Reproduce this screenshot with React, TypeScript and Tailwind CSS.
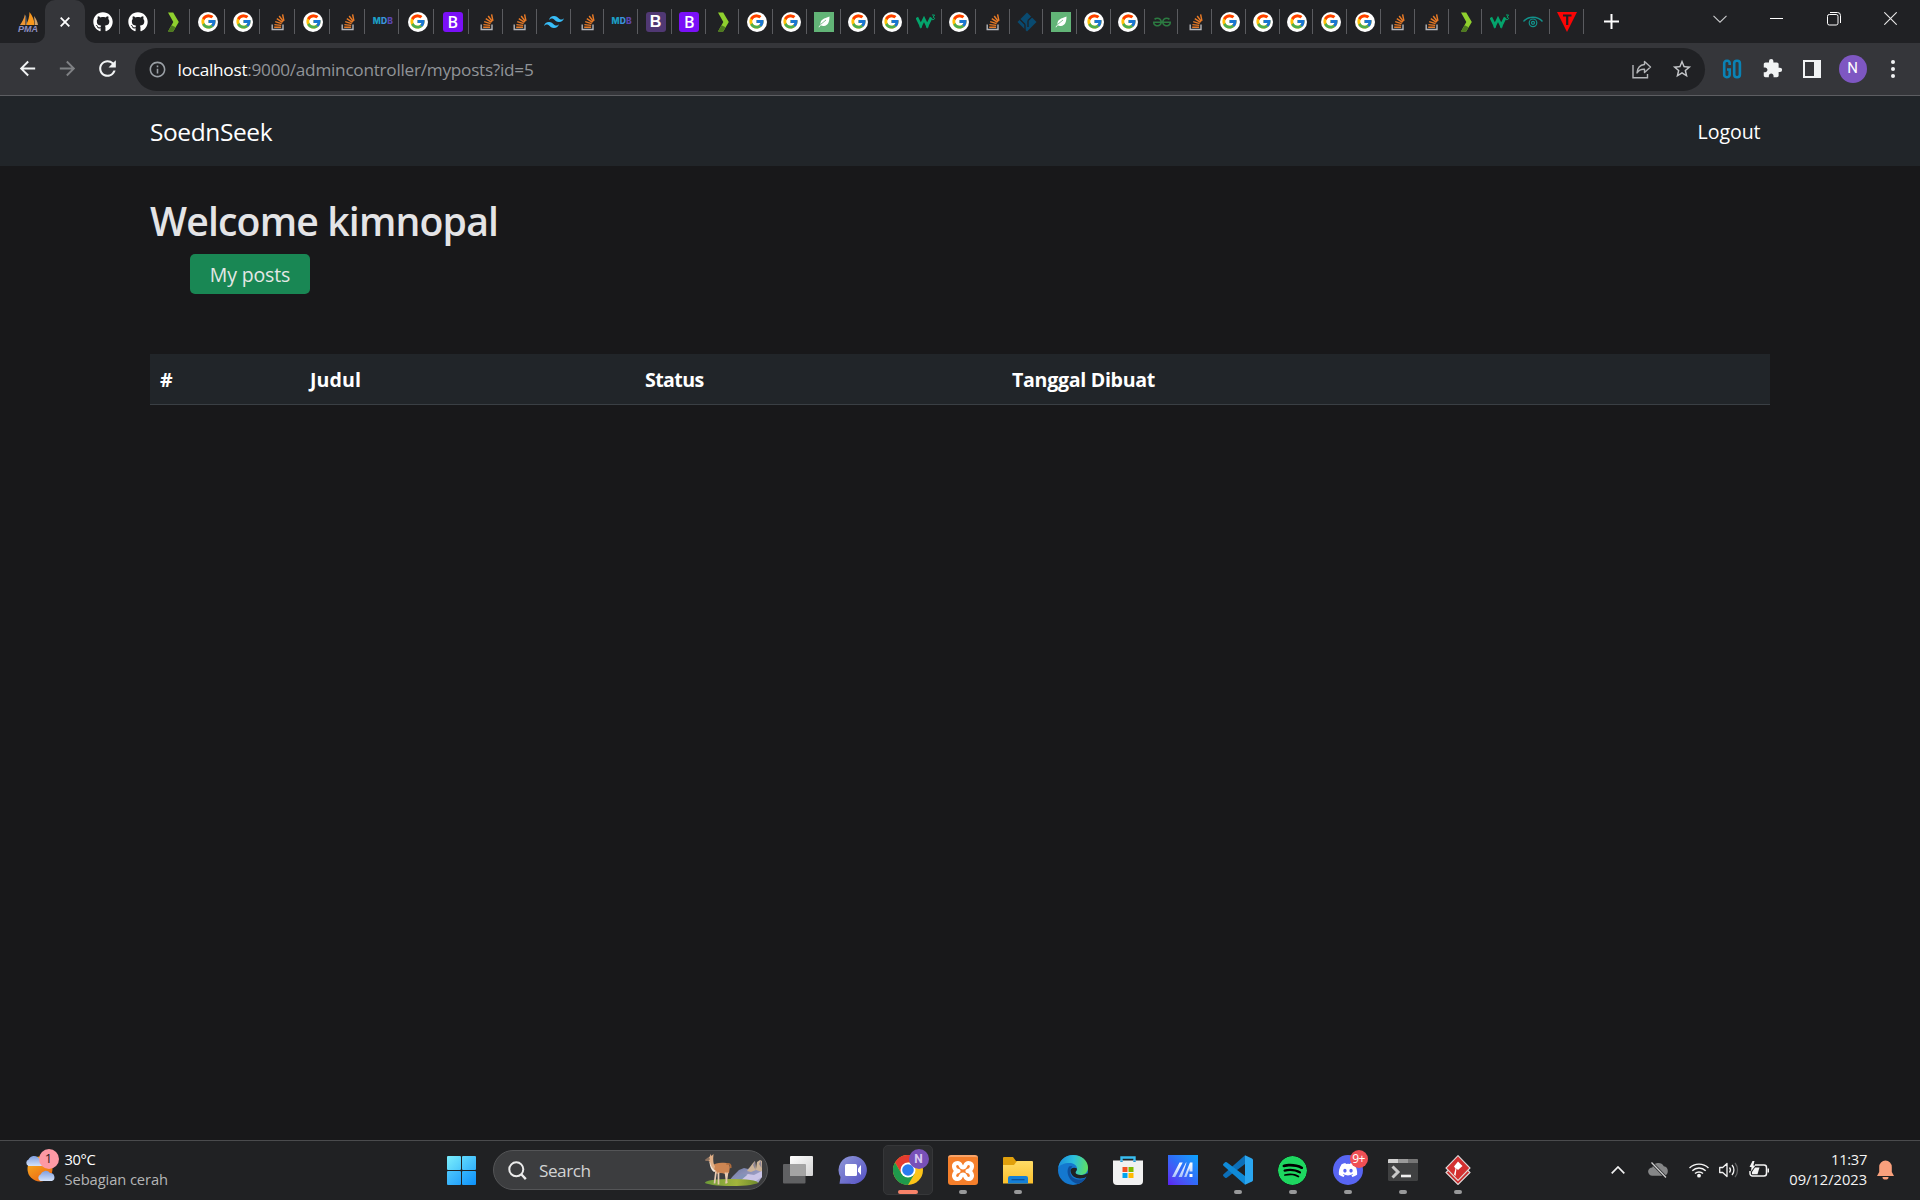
import React from 'react';
import { FcGoogle } from 'react-icons/fc';
import { FaGithub, FaLeaf, FaDiscord } from 'react-icons/fa';
import { SiTailwindcss, SiGeeksforgeeks, SiSpotify } from 'react-icons/si';
import { MdExtension, MdRefresh, MdArrowBack, MdArrowForward, MdInfoOutline, MdStarBorder } from 'react-icons/md';

/* ---------- favicons ---------- */

const Google = () => (
  <div className="flex size-5 items-center justify-center rounded-full bg-white">
    <FcGoogle size={17} />
  </div>
);

const StackOverflow = () => (
  <svg width="20" height="20" viewBox="0 0 20 20" fill="none">
    <path d="M4.2 12.5v5h10.8v-5" stroke="#b4b6ba" strokeWidth="1.4" />
    <path d="M6.2 15.3h6.9M6.4 12.6l6.8.8M7.2 9.6l6.4 2M8.8 6.6l5.7 3.7M11.2 4l4.1 5.5M14.6 2.4l1.3 6.5" stroke="#e87a26" strokeWidth="1.45" />
  </svg>
);

const GreenChevron = () => (
  <svg width="20" height="20" viewBox="0 0 20 20">
    <path d="M5 0.5h5.2L15.8 10l-5.6 9.5H5L10.3 10z" fill="#8fd02e" />
    <path d="M5 19.5l3.6-6.2 4 2L10.2 19.5z" fill="#4d7a20" />
  </svg>
);

const Mdb = () => (
  <div className="flex font-['Inter'] text-[8.5px] leading-none font-extrabold tracking-[0.2px]">
    <span className="text-[#1c9fc4]">M</span>
    <span className="text-[#3a94dc]">D</span>
    <span className="text-[#5c46b0]">B</span>
  </div>
);

const Bootstrap = ({ old }: { old?: boolean }) => (
  <div
    className={`flex size-5 items-center justify-center rounded-[3px] text-[16px] leading-none text-white ${
      old ? "bg-[#503873] font-['Liberation_Sans'] font-bold" : "bg-[#7a10f7] font-['Open_Sans'] font-semibold"
    }`}
  >
    B
  </div>
);

const Leaf = () => (
  <div className="flex size-5 items-center justify-center bg-[#62b477]">
    <svg width="12" height="12" viewBox="0 0 12 12">
      <path d="M11.5 0.5C11.500 6 10 9.500 6 10c-1.500.2-2.500-.3-3.200-.8L1 11.500l-.5-.5 2-2.500C2 3.500 6 2.500 11.500.5z" fill="#fff" />
      <path d="M2.500 8.500L8 4" stroke="#62b477" strokeWidth="0.8" />
    </svg>
  </div>
);

const W3 = () => (
  <svg width="20" height="20" viewBox="0 0 20 20" fill="none" stroke="#04a46c">
    <path d="M0.8 5.500l4 8 3.200-6.500 3.200 6.500 4-8" strokeWidth="2.800" />
    <path d="M4.800 15.500v-4M11.200 15.500v-4" strokeWidth="2.400" />
    <path d="M16 3h2.600l-1.500 2.200c2 0 2.200 3-1.300 2.400" strokeWidth="1" />
  </svg>
);

const Diamond = () => (
  <svg width="20" height="20" viewBox="0 0 20 20">
    <path d="M10 0.5L19.500 10 10 19.500 0.500 10z" fill="#094a70" />
    <path d="M3 7.500L8 12.500M8 12.500V18M11 8.500L15 4.800M11 8.500v6.500" stroke="#202124" strokeWidth="1.3" fill="none" />
  </svg>
);

const Eye = () => (
  <svg width="20" height="20" viewBox="0 0 20 20" fill="none" stroke="#12938c">
    <path d="M0.5 9.500C3 6.500 6 5.200 10 5.200S17 6.500 19.500 9.500" strokeWidth="1.4" />
    <circle cx="10" cy="10.800" r="3.800" strokeWidth="1.200" />
    <circle cx="10" cy="10.800" r="1.500" strokeWidth="1.300" />
  </svg>
);

const RedT = () => (
  <svg width="20" height="20" viewBox="0 0 20 20">
    <path d="M0 0h20L10 20z" fill="#fb0505" />
    <path d="M6 3.500h8.500M10.200 3.500v9.500" stroke="#202124" strokeWidth="2.2" />
  </svg>
);

const Pma = () => (
  <div className="relative size-5">
    <svg width="20" height="20" viewBox="0 0 20 20">
      <path d="M6 2L6.500 13H1C3 10 5 7 6 2z" fill="#ee9534" />
      <path d="M10.500 0C13.500 4 15.500 8 15.500 13H7C9 9 10.500 5 10.500 0z" fill="#f8981d" />
      <path d="M15 4c2 2.500 3.500 5.500 4 9h-3z" fill="#d0a36c" />
      <path d="M6.500 3.500l1 9" stroke="#8a8f98" strokeWidth="0.8" />
    </svg>
    <span className="absolute -bottom-px -left-px font-['Liberation_Sans'] text-[9px] leading-[8px] font-bold text-[#8d8fc0] italic">PMA</span>
  </div>
);

const Github = () => <FaGithub size={20} className="text-white" />;
const Tailwind = () => <SiTailwindcss size={20} className="text-[#38bdf8]" />;
const Gfg = () => <SiGeeksforgeeks size={18} className="text-[#2c7a41]" />;
const BootOld = () => <Bootstrap old />;
const Boot = () => <Bootstrap />;

const wideTabs = [Github, Github, GreenChevron, Google, Google, StackOverflow, Google, StackOverflow, Mdb, Google, Boot];
const narrowTabs = [
  StackOverflow, StackOverflow, Tailwind, StackOverflow, Mdb, BootOld, Boot, GreenChevron, Google, Google, Leaf,
  Google, Google, W3, Google, StackOverflow, Diamond, Leaf, Google, Google, Gfg, StackOverflow,
  Google, Google, Google, Google, Google, StackOverflow, StackOverflow, GreenChevron, W3, Eye, RedT,
];

function TabStrip() {
  return (
    <div className="flex h-[43px] bg-[#202124]">
      <div className="flex w-[45px] items-center pl-[19px]">
        <Pma />
      </div>
      <div className="relative flex w-10 shrink-0 items-center justify-center rounded-t-[10px] bg-[#35363a]">
        <div className="absolute bottom-0 -left-2.5 size-2.5 bg-[#35363a]">
          <div className="size-full rounded-br-[10px] bg-[#202124]" />
        </div>
        <div className="absolute -right-2.5 bottom-0 size-2.5 bg-[#35363a]">
          <div className="size-full rounded-bl-[10px] bg-[#202124]" />
        </div>
        <svg width="10" height="10" viewBox="0 0 10 10" stroke="#fff" strokeWidth="1.8">
          <path d="M0.7 0.7l8.600 8.600M9.300 0.700L0.700 9.300" />
        </svg>
      </div>
      <div className="flex items-center">
        {wideTabs.map((Icon, i) => (
          <div key={i} className="flex h-[25px] w-[34.95px] items-center justify-center border-r border-[#5a5b5f] pl-[3px]">
            <Icon />
          </div>
        ))}
        {narrowTabs.map((Icon, i) => (
          <div key={i} className="flex h-[25px] w-[33.77px] items-center justify-center border-r border-[#5a5b5f] pl-0.5">
            <Icon />
          </div>
        ))}
        <svg className="ml-[20px]" width="15" height="15" viewBox="0 0 15 15" stroke="#fff" strokeWidth="2">
          <path d="M7.5 0v15M0 7.500h15" />
        </svg>
      </div>
      <div className="ml-auto flex h-[37px] items-center pr-px">
        <div className="flex w-[57px] justify-center">
          <svg width="14" height="8" viewBox="0 0 14 8" fill="none" stroke="#c9cacc" strokeWidth="1.1">
            <path d="M0.5 0.800L7 7.200l6.500-6.400" />
          </svg>
        </div>
        <div className="flex w-[57px] justify-center">
          <div className="h-px w-[13px] bg-white" />
        </div>
        <div className="flex w-[57px] justify-center">
          <svg width="14" height="14" viewBox="0 0 14 14" fill="none" stroke="#fff" strokeWidth="1">
            <rect x="0.5" y="2.500" width="10.500" height="10.500" rx="1.800" />
            <path d="M3 0.500h7.500a3 3 0 0 1 3 3V11" />
          </svg>
        </div>
        <div className="flex w-[57px] justify-center">
          <svg width="13" height="13" viewBox="0 0 13 13" stroke="#e8e8e8" strokeWidth="1.1">
            <path d="M0.3 0.300l12.400 12.400M12.700 0.300L0.300 12.700" />
          </svg>
        </div>
      </div>
    </div>
  );
}

function Toolbar() {
  return (
    <div className="flex h-[53px] items-center border-b border-[#5d5e62] bg-[#35363a] pt-px">
      <div className="flex w-[135px] items-center pb-0.5 pl-[7px]">
        <div className="flex w-10 justify-center text-[#f1f3f4]"><MdArrowBack size={23} /></div>
        <div className="flex w-10 justify-center text-[#7f8184]"><MdArrowForward size={23} /></div>
        <div className="flex w-[41px] justify-center text-[#f1f3f4]"><MdRefresh size={25} /></div>
      </div>
      <div className="flex h-[43px] w-[1570px] items-center rounded-full bg-[#202124] pr-[3px]">
        <MdInfoOutline size={19} className="ml-[13px] text-[#9aa0a6]" />
        <div className="ml-[10.6px] text-[17.2px] tracking-[-0.26px] text-[#919498]">
          <span className="text-white">localhost</span>:9000/admincontroller/myposts?id=5
        </div>
        <div className="ml-auto flex w-10 justify-center">
          <svg width="20" height="19" viewBox="0 0 20 19" fill="none" stroke="#b4b6b9" strokeWidth="1.4">
            <path d="M1 5v12.700h14.500V14" />
            <path d="M12.5 1.500L18.500 7l-6 5.500V9.300C8.500 9 6.500 10.500 5 13c.300-4.500 2.800-8 7.500-8.500z" strokeLinejoin="round" />
          </svg>
        </div>
        <div className="flex w-10 justify-center pb-0.5 text-[#c4c6c9]"><MdStarBorder size={22} /></div>
      </div>
      <div className="flex flex-1 items-center pb-0.5 pl-[7px]">
        <div className="flex w-10 justify-center">
          <svg width="20" height="20" viewBox="0 0 20 20" fill="none" stroke="#0a82b4" strokeWidth="2.6">
            <path d="M7.7 6V4.300a2.300 2.300 0 0 0-2.300-2.500h-.800a2.400 2.400 0 0 0-2.400 2.500v11.400a2.400 2.400 0 0 0 2.400 2.500c2 0 3.100-1 3.100-2.500V10.500H5" />
            <rect x="12.2" y="1.800" width="5.700" height="16.400" rx="2.600" />
          </svg>
        </div>
        <div className="flex w-[41px] justify-center text-[#f1f3f4]"><MdExtension size={21} /></div>
        <div className="flex w-[38px] justify-center">
          <div className="h-[18px] w-[18px] border-2 border-r-[7px] border-[#f1f3f4]" />
        </div>
        <div className="flex w-[43px] justify-center">
          <div className="flex size-7 items-center justify-center rounded-full bg-[#7e57c2] font-['Roboto'] text-[15px] text-white">N</div>
        </div>
        <div className="flex w-[37px] flex-col items-center gap-[3px]">
          <div className="size-1 rounded-full bg-[#f1f3f4]" />
          <div className="size-1 rounded-full bg-[#f1f3f4]" />
          <div className="size-1 rounded-full bg-[#f1f3f4]" />
        </div>
      </div>
    </div>
  );
}

/* ---------- page ---------- */

function Page() {
  return (
    <div className="flex flex-1 flex-col bg-[#18181a]">
      <nav className="flex h-[70px] items-center justify-between bg-[#212529] pt-0.5 pr-[159.5px] pl-[150px] text-white">
        <span className="text-[24.5px] tracking-[-0.4px]">SoednSeek</span>
        <span className="text-[19.6px] tracking-[-0.08px]">Logout</span>
      </nav>
      <main className="flex flex-col items-start px-[150px] pt-[31px]">
        <h1 className="text-[39.2px] leading-[48px] font-semibold tracking-[-0.85px] text-[#e4e4e6]">Welcome kimnopal</h1>
        <button className="mt-[9px] ml-10 h-10 w-[120px] rounded-[5px] bg-[#198754] pt-0.5 text-[19.5px] tracking-[-0.15px] text-[#e4e8e6]">My posts</button>
        <div className="mt-[60px] flex h-[51px] w-full items-center border-b border-[#3a3f44] bg-[#212529] pt-0.5 pl-2.5 text-[19.6px] font-bold text-white">
          <span className="w-[150px]">#</span>
          <span className="w-[335px] tracking-[0.1px]">Judul</span>
          <span className="w-[367px] tracking-[-0.6px]">Status</span>
          <span className="tracking-[-0.3px]">Tanggal Dibuat</span>
        </div>
      </main>
    </div>
  );
}

/* ---------- taskbar ---------- */

const Weather = () => (
  <div className="relative -mt-0.5 h-[30px] w-[39.5px]">
    <svg width="40" height="34" viewBox="0 0 40 34" className="absolute top-0 left-0">
      <defs>
        <linearGradient id="sun" x1="0" y1="0" x2="0.6" y2="1">
          <stop offset="0" stopColor="#f9b924" />
          <stop offset="1" stopColor="#ec6a12" />
        </linearGradient>
        <linearGradient id="cloud" x1="0" y1="0" x2="0" y2="1">
          <stop offset="0" stopColor="#7f9fe0" />
          <stop offset="1" stopColor="#d4e2fa" />
        </linearGradient>
      </defs>
      <circle cx="15" cy="15" r="12.5" fill="url(#sun)" />
      <path d="M3.5 12a3.500 3.500 0 0 1 0-6.500 6 6 0 0 1 10-1.500l6 4v4z" fill="url(#cloud)" />
      <path d="M15.5 27a3.500 3.500 0 0 1 0-6.500 5.500 5.500 0 0 1 9.500-1.500 4.200 4.200 0 0 1 2 8z" fill="url(#cloud)" />
    </svg>
    <span className="absolute -top-[5px] left-[13.5px] flex size-5 items-center justify-center rounded-full bg-[#fd99a4] text-[13px] text-[#2a1a1d]">1</span>
  </div>
);

const Start = () => (
  <div className="grid grid-cols-2 gap-px">
    <div className="size-[14px] rounded-[1px] bg-linear-to-br from-[#7aeefc] to-[#4cc8fc]" />
    <div className="size-[14px] rounded-[1px] bg-linear-to-br from-[#5fd8fd] to-[#30b0fb]" />
    <div className="size-[14px] rounded-[1px] bg-linear-to-br from-[#4cc6fc] to-[#23a2fb]" />
    <div className="size-[14px] rounded-[1px] bg-linear-to-br from-[#35b5fc] to-[#0b91fa]" />
  </div>
);

const Alpaca = () => (
  <svg width="60" height="34" viewBox="0 0 60 34">
    <defs>
      <linearGradient id="grass" x1="0" y1="0" x2="1" y2="0">
        <stop offset="0" stopColor="#6d9a38" />
        <stop offset="0.6" stopColor="#a3b43c" />
        <stop offset="1" stopColor="#6e8a2c" />
      </linearGradient>
      <linearGradient id="hill" x1="0" y1="0" x2="1" y2="1">
        <stop offset="0" stopColor="#66749e" />
        <stop offset="1" stopColor="#b4b0d4" />
      </linearGradient>
    </defs>
    <path d="M24 29l5-6 6-6 5-2 4 1 4-3 5 3 5-2v10l-4 6z" fill="url(#hill)" />
    <path d="M43 18l3-4 3-4 2-2 1 8 1-7 3-2 2 1v11l-6-2-5 2z" fill="#cdb498" />
    <path d="M49 12l2-4 .5 9zM55 11l2-4 .5 8z" fill="#8d8596" />
    <path d="M36 26l8-5 6 1 8-4v6l-6 4-10 1z" fill="#c9c4e6" />
    <path d="M30 27l8-6 5 1-8 7z" fill="#8292b8" />
    <ellipse cx="27.5" cy="29.500" rx="26.500" ry="3.500" fill="url(#grass)" />
    <path d="M8.500 12.500c3-2.500 7-3.300 14-2.500 2 .3 3.300 2 3.300 4.500L25 20l-4 1c-3-1.200-6-1.200-8 0l-4-4z" fill="#cd8653" />
    <path d="M23 11c2-.5 4-.5 3.800 3.500" stroke="#b06c3c" strokeWidth="1.6" fill="none" strokeLinecap="round" />
    <path d="M3 7.500l3-4.500L6.500 1l1 2 2-2-.3 4.500C9.300 9 9.500 11 11 13.500l-1 3.500C7 15 6 12 5.500 8.500z" fill="#dfae86" />
    <path d="M1 6.800L4.500 4l1.500 2-1.500 2H1.500z" fill="#8a705e" />
    <path d="M6 9c.8 4 2.500 7 6 9l-2 1C7 17 5.800 13 5.500 9z" fill="#f2e6da" />
    <path d="M12 18.500l-1.500 12M14.500 19.500v12M21.500 19.500l1.300 10.500M23.500 19.500l-1.500 11" stroke="#e6c9b2" strokeWidth="1.7" />
  </svg>
);

const TaskView = () => (
  <svg width="30" height="30" viewBox="0 0 30 30">
    <defs>
      <linearGradient id="tv" x1="0" y1="0" x2="1" y2="1">
        <stop offset="0" stopColor="#fff" />
        <stop offset="1" stopColor="#d2d2d2" />
      </linearGradient>
    </defs>
    <rect x="7" y="1" width="23" height="20" rx="1" fill="url(#tv)" />
    <rect x="0" y="9" width="22.5" height="19.500" rx="1" fill="#606163" />
    <path d="M7 9h15.500v12H7z" fill="#a4a4a4" />
  </svg>
);

const Chat = () => (
  <svg width="30" height="30" viewBox="0 0 30 30">
    <defs>
      <linearGradient id="chat" x1="0" y1="0" x2="1" y2="1">
        <stop offset="0" stopColor="#8f98d8" />
        <stop offset="1" stopColor="#5450c4" />
      </linearGradient>
    </defs>
    <path d="M15 1a14 14 0 1 1-3 27.700H1.500L2.500 22A14 14 0 0 1 15 1z" fill="url(#chat)" />
    <rect x="7" y="9" width="12" height="12" rx="1.5" fill="#fff" />
    <path d="M20 13.500l3-3.500v10l-3-3.500z" fill="#fff" />
  </svg>
);

const Chrome = () => (
  <div className="relative size-[30px]">
    <svg width="30" height="30" viewBox="0 0 30 30">
      <circle cx="15" cy="15" r="15" fill="#fcc419" />
      <path d="M2 7.500A15 15 0 0 1 28 7.500H15L8.500 18.800z" fill="#e53b2f" />
      <path d="M2 7.500A15 15 0 0 0 15 30l6.500-11.200h-13z" fill="#1f9a4c" />
      <circle cx="15" cy="15" r="7.5" fill="#fff" />
      <circle cx="15" cy="15" r="5.8" fill="#2a7bf0" />
    </svg>
    <span className="absolute -top-[6px] left-4 flex size-5 items-center justify-center rounded-full bg-[#7850b8] font-['Roboto'] text-[12px] font-bold text-[#d8c8f0]">N</span>
  </div>
);

const Xampp = () => (
  <div className="flex size-[30px] items-center justify-center rounded-[3px] border-t-2 border-[#f9a468] bg-[#f57f2b] text-white">
    <svg width="24" height="22" viewBox="0 0 24 22" fill="none" stroke="#fff" strokeWidth="4.2" strokeLinejoin="round" strokeLinecap="round">
      <path d="M7.5 11C2 10 1.500 3 6.500 3c4 0 2.500 4.500 5.500 4.500S13.500 3 17.500 3c5 0 4.500 7-1 8 5.500 1 6 8 1 8-4 0-2.500-4.500-5.500-4.500S10.500 19 6.500 19c-5 0-4.500-7 1-8z" />
    </svg>
  </div>
);

const Folder = () => (
  <svg width="30" height="30" viewBox="0 0 30 30">
    <defs>
      <linearGradient id="fold" x1="0" y1="0" x2="0" y2="1">
        <stop offset="0" stopColor="#ffdc66" />
        <stop offset="1" stopColor="#fbc02c" />
      </linearGradient>
    </defs>
    <path d="M0 3a1 1 0 0 1 1-1h9l3 4H29v8H0z" fill="#e0a00c" />
    <path d="M0 10h11l3-4h15a1 1 0 0 1 1 1v21.500H0z" fill="url(#fold)" />
    <path d="M5 28.500V23a2 2 0 0 1 2-2h16a2 2 0 0 1 2 2v5.500z" fill="#1480d8" />
    <path d="M8.5 24.700h13" stroke="#0b4f96" strokeWidth="1.2" />
  </svg>
);

const Edge = () => (
  <svg width="30" height="30" viewBox="0 0 30 30">
    <defs>
      <linearGradient id="edgeTop" x1="0" y1="0.4" x2="1" y2="0.5">
        <stop offset="0" stopColor="#1b8fdc" />
        <stop offset="0.5" stopColor="#2cc0dc" />
        <stop offset="1" stopColor="#5fe060" />
      </linearGradient>
    </defs>
    <circle cx="15" cy="15" r="15" fill="#1478cf" />
    <path d="M0.2 13C1.500 5 7.500 0 15 0c9 0 15 6 15 12.500 0 5-3.500 7.500-7.500 7.500-3 0-5-1-5-2.500 0-1 1.500-1.500 1.500-4C19 10.500 16 8 11.500 8 6 8 1.500 10 0.200 13z" fill="url(#edgeTop)" />
    <path d="M11 11.500c-4 6 1 16 9 17.500 3-1 6-3 8-6-3 2-12 3-15-3-2-4-.500-7 1.500-8.500-1-.500-2.500-.500-3.500 0z" fill="#0e4f9c" />
    <path d="M12.5 15.500c0 5 5 8 9.500 8 3 0 5.500-.800 7-2l1.500-3-2 0c-1.500 1-3.800 1.500-6 1.500-3 0-5-1-5-2.500 0-1 1.500-1.500 1.500-4-3-1.500-6.500-.500-6.500 2z" fill="#202123" />
  </svg>
);

const Store = () => (
  <svg width="30" height="30" viewBox="0 0 30 30">
    <path d="M8.5 7V2.500h13V7" fill="none" stroke="#38bdf0" strokeWidth="2.4" />
    <path d="M0 5.500h30V26a4 4 0 0 1-4 4H4a4 4 0 0 1-4-4z" fill="#f1f1f1" />
    <path d="M7.3 5.500h2.400V7H7.300zM20.300 5.500h2.400V7h-2.400z" fill="#2498d4" />
    <path d="M9.5 12h5v5h-5z" fill="#f25022" />
    <path d="M15.5 12h5v5h-5z" fill="#7fba00" />
    <path d="M9.5 18h5v5h-5z" fill="#00a4ef" />
    <path d="M15.5 18h5v5h-5z" fill="#ffb900" />
  </svg>
);

const MyAsus = () => (
  <div className="flex size-[30px] items-center justify-center bg-linear-to-tr from-[#5a1cf0] via-[#2f6bf8] to-[#04a4fc]">
    <svg width="22" height="16" viewBox="0 0 22 16">
      <defs>
        <linearGradient id="asus" x1="0" y1="0" x2="0" y2="1">
          <stop offset="0" stopColor="#ffffff" />
          <stop offset="1" stopColor="#a9c4fb" />
        </linearGradient>
      </defs>
      <path d="M0 15L7.500 0.500h3.200L3.200 15zM6.500 15L14 0.500h.500L10 15zM12 15L18 0.500h2.500V9.500h-3V6.500L14.500 15z" fill="url(#asus)" />
      <path d="M17.5 12h3v3h-3z" fill="#fff" />
    </svg>
  </div>
);

const VsCode = () => (
  <svg width="30" height="30" viewBox="0 0 30 30">
    <path d="M22 0.300V9L3.800 22.700a1.300 1.300 0 0 1-1.700 0L.500 21.200a1.300 1.300 0 0 1 0-1.900z" fill="#0c6fb8" />
    <path d="M22 29.700V21L3.800 7.300a1.300 1.300 0 0 0-1.700 0L.500 8.800a1.300 1.300 0 0 0 0 1.900z" fill="#0f8ad8" />
    <path d="M22 0.200l7 3.200a1.800 1.800 0 0 1 1 1.600v20a1.800 1.800 0 0 1-1 1.600l-7 3.200z" fill="#2aa6f0" />
  </svg>
);

const Spotify = () => <SiSpotify size={29} className="rounded-full bg-black text-[#1ed760]" />;

const Discord = () => (
  <div className="relative flex size-[30px] items-center justify-center rounded-full bg-[#5865f2] text-white">
    <FaDiscord size={20} />
    <span className="absolute -top-[5px] left-[17px] flex size-[18px] items-center justify-center rounded-full bg-[#f04f55] text-[12px] tracking-[-0.5px]">9+</span>
  </div>
);

const Terminal = () => (
  <svg width="30" height="30" viewBox="0 0 30 30">
    <rect x="0" y="4" width="30" height="22" rx="1.5" fill="#404142" />
    <path d="M1 4h9.500v4H0V5a1 1 0 0 1 1-1z" fill="#d0d0d0" />
    <path d="M10.5 4H20v4h-9.500z" fill="#9a9a9a" />
    <path d="M20 4h9a1 1 0 0 1 1 1v3H20z" fill="#767676" />
    <path d="M4.5 11.500l5.500 5.500-5.500 5.500" fill="none" stroke="#c9c9c9" strokeWidth="3" />
    <path d="M13 21h10" stroke="#efefef" strokeWidth="2.6" />
  </svg>
);

const Paradigm = () => (
  <svg width="30" height="30" viewBox="0 0 30 30">
    <path d="M15 6L27 17.500 15 29.500 3 17.500z" fill="#c92f2f" stroke="#e2dcdc" strokeWidth="1.1" />
    <path d="M15 0.700L27 13 15 25.500 3 13z" fill="#d33030" stroke="#e2dcdc" strokeWidth="1.1" />
    <path d="M15 6.500l4.500 4.500-4.500 4-1.500-1.500-1 7.500-1.500-1.500 1.500-6-1.500-2z" fill="#fff" />
  </svg>
);

const apps: { Icon: () => React.ReactElement; mark?: 'active' | 'open' }[] = [
  { Icon: TaskView },
  { Icon: Chat },
  { Icon: Chrome, mark: 'active' },
  { Icon: Xampp, mark: 'open' },
  { Icon: Folder, mark: 'open' },
  { Icon: Edge },
  { Icon: Store },
  { Icon: MyAsus },
  { Icon: VsCode, mark: 'open' },
  { Icon: Spotify, mark: 'open' },
  { Icon: Discord, mark: 'open' },
  { Icon: Terminal, mark: 'open' },
  { Icon: Paradigm, mark: 'open' },
];

function Tray() {
  return (
    <div className="ml-auto flex items-center">
      <svg className="mr-[23px]" width="14" height="8" viewBox="0 0 14 8" fill="none" stroke="#f2f2f2" strokeWidth="1.7">
        <path d="M0.7 7.300L7 1l6.300 6.300" />
      </svg>
      <svg width="21" height="18" viewBox="0 0 21 18">
        <path d="M4.3 14.800a4.200 4.200 0 0 1 0-8.400A6.300 6.300 0 0 1 15.800 5.200 4.900 4.900 0 0 1 16 14.800z" fill="#858687" />
        <path d="M3.5 1.500l14.500 15" stroke="#202123" strokeWidth="2.8" />
        <path d="M3.5 1.500l14.500 15" stroke="#d0d0d0" strokeWidth="1.3" />
      </svg>
      <svg className="ml-5" width="20" height="16" viewBox="0 0 20 16" fill="none" stroke="#f4f4f4" strokeWidth="1.4">
        <path d="M0.5 6a13.500 13.500 0 0 1 19 0M3.300 8.800a9.500 9.500 0 0 1 13.400 0M6 11.600a5.700 5.700 0 0 1 8 0" />
        <circle cx="10" cy="13.7" r="1.9" fill="#f4f4f4" stroke="none" />
      </svg>
      <svg className="ml-[10px]" width="20" height="16" viewBox="0 0 20 16" fill="none" stroke="#f4f4f4" strokeWidth="1.3">
        <path d="M0.7 5.500h3L8 1.500v13L3.700 10.500h-3z" strokeLinejoin="round" />
        <path d="M10.5 5.500a4 4 0 0 1 0 5M13 3a7.500 7.500 0 0 1 0 10" />
        <path d="M16 1a11 11 0 0 1 0 14" stroke="#606162" />
      </svg>
      <svg className="ml-[10px]" width="21" height="18" viewBox="0 0 21 18">
        <path d="M6 4h9a2.500 2.500 0 0 1 2.500 2.500v6A2.500 2.500 0 0 1 15 15H3.500A2.500 2.500 0 0 1 1 12.500V10" fill="none" stroke="#f4f4f4" strokeWidth="1.5" />
        <path d="M18.5 7.500h1.500v4h-1.500z" fill="#f4f4f4" />
        <path d="M3 13.200V11l3-4.500h4.500l-2 6.700z" fill="#f4f4f4" />
        <path d="M3.5 0L0.500 6h2L2 10.500 6.500 4.500H4.300L5.500 0z" fill="#f4f4f4" />
      </svg>
      <div className="-mt-[3px] ml-[18px] w-[79px] text-right text-[14.7px] leading-5 text-[#f4f4f4]">
        <div className="tracking-[-0.3px]">11:37</div>
        <div className="tracking-[-0.03px]">09/12/2023</div>
      </div>
      <svg className="mr-[26px] ml-[10px]" width="17" height="20" viewBox="0 0 17 20" fill="#f9a07c">
        <path d="M8.5 0.500A6.300 6.300 0 0 1 14.800 7v5L17 16H0l2.200-4V7A6.300 6.300 0 0 1 8.500.500z" />
        <path d="M5.5 17h6a3 2.600 0 0 1-6 0z" />
      </svg>
    </div>
  );
}

function Taskbar() {
  return (
    <footer className="flex h-[60px] items-center border-t border-[#4a4b4d] bg-[#202123] pb-px">
      <div className="flex w-[433px] items-center pl-[25px]">
        <Weather />
        <div className="-mt-[3px] text-[14.7px] leading-5">
          <div className="tracking-[-0.4px] text-white">30°C</div>
          <div className="tracking-[-0.08px] text-[#b4b5b6]">Sebagian cerah</div>
        </div>
      </div>
      <div className="flex w-[56px] justify-center">
        <Start />
      </div>
      <div className="ml-1 flex h-10 w-[275px] items-center rounded-full border border-[#545557] bg-[#3c3d3f] pr-[3px] pl-[14px]">
        <svg width="19" height="19" viewBox="0 0 19 19" fill="none" stroke="#ececec" strokeWidth="2">
          <circle cx="8.3" cy="8.300" r="7" />
          <path d="M13.3 13.300l4.500 4.800" strokeWidth="2.4" />
        </svg>
        <span className="mt-px ml-3 text-[17.2px] tracking-[-0.5px] text-[#d2d3d4]">Search</span>
        <div className="ml-auto">
          <Alpaca />
        </div>
      </div>
      <div className="ml-[2px] flex">
        {apps.map(({ Icon, mark }, i) => (
          <div key={i} className="flex w-[55px] justify-center">
            <div
              className={`relative flex size-[50px] items-center justify-center rounded-[5px] border ${
                mark === 'active' ? 'border-[#363739] bg-[#2c2d2f]' : 'border-transparent'
              }`}
            >
              <Icon />
              {mark === 'active' && <div className="absolute bottom-0 h-1 w-5 rounded-full bg-[#f7836a]" />}
              {mark === 'open' && <div className="absolute bottom-0 h-1 w-2 rounded-full bg-[#98999a]" />}
            </div>
          </div>
        ))}
      </div>
      <Tray />
    </footer>
  );
}

export default function App() {
  return (
    <div className="flex h-[1200px] w-[1920px] flex-col overflow-hidden font-['Open_Sans',sans-serif]">
      <TabStrip />
      <Toolbar />
      <Page />
      <Taskbar />
    </div>
  );
}
